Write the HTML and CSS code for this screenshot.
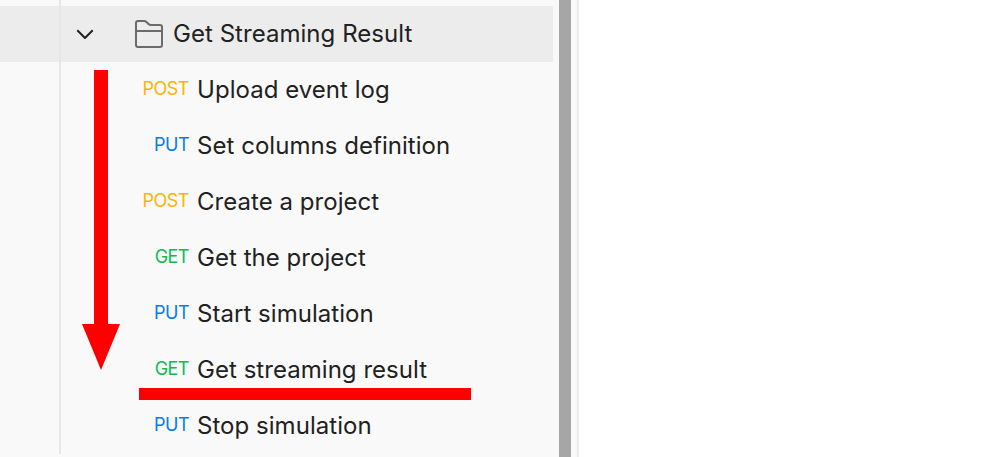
FILE: index.html
```
<!DOCTYPE html>
<html lang="en">
<head>
<meta charset="utf-8">
<title>Collections</title>
<link rel="stylesheet" href="styles.css">
</head>
<body>
<div class="app">
  <aside class="sidebar">
    <div class="folder">
      <svg class="chevron" width="20" height="12" viewBox="0 0 20 12"><path d="M2.300 2.300L10 10l7.700-7.700"/></svg>
      <svg class="folder-icon" width="30" height="30" viewBox="0 0 30 30"><path d="M2 26V4q0-2 2-2h6q1.500 0 2.500 1l2 2q1 1 2.500 1h9q2 0 2 2v18q0 2-2 2H4q-2 0-2-2zM2 12h26"/></svg>
      <span class="folder-name">Get Streaming Result</span>
    </div>
    <ul class="requests">
      <li class="request"><span class="method post">POST</span><span class="name">Upload event log</span></li>
      <li class="request"><span class="method put">PUT</span><span class="name">Set columns definition</span></li>
      <li class="request"><span class="method post">POST</span><span class="name">Create a project</span></li>
      <li class="request"><span class="method get">GET</span><span class="name">Get the project</span></li>
      <li class="request"><span class="method put">PUT</span><span class="name">Start simulation</span></li>
      <li class="request"><span class="method get">GET</span><span class="name">Get streaming result</span></li>
      <li class="request"><span class="method put">PUT</span><span class="name">Stop simulation</span></li>
    </ul>
    <div class="guide"></div>
    <svg class="arrow" width="38" height="300" viewBox="0 0 38 300"><path d="M12 0h14v254h12L19 300 0 254h12z"/></svg>
    <div class="underline"></div>
  </aside>
  <div class="scrollbar"></div>
  <div class="gutter"></div>
  <main class="content"></main>
</div>
</body>
</html>
```
FILE: styles.css
```
body { margin: 0; background: #fff; overflow: hidden; }
.app { display: flex; height: 457px; font-family: Inter, sans-serif; color: #212121; }
.sidebar { position: relative; width: 559px; background: #f9f9f9; padding-top: 6px; box-sizing: border-box; }
.folder { display: flex; align-items: center; width: 553px; height: 56px; padding-left: 75px; box-sizing: border-box; background: #ececec; font-size: 24px; }
.chevron, .folder-icon { fill: none; stroke-linejoin: round; }
.chevron { stroke: #212121; stroke-width: 2; }
.folder-icon { margin-left: 39px; stroke: #6b6b6b; stroke-width: 2; }
.folder-name { margin-left: 9px; padding-bottom: 2px; letter-spacing: 0.04px; white-space: nowrap; }
.requests { list-style: none; margin: 0; padding: 0; }
.request { display: flex; align-items: center; height: 56px; padding-bottom: 2px; box-sizing: border-box; font-size: 24px; }
.method { width: 189px; padding-bottom: 2px; text-align: right; font-size: 18px; letter-spacing: -0.5px; }
.name { margin-left: 8px; letter-spacing: 0.04px; white-space: nowrap; }
.post { color: #ffb400; }
.put { color: #097bed; }
.get { color: #0cbb52; }
.guide { position: absolute; left: 59px; top: 0; width: 2px; height: 454px; background: #e6e6e6; }
.arrow { position: absolute; left: 82px; top: 70px; fill: #f00; }
.underline { position: absolute; left: 139px; top: 388px; width: 332px; height: 12px; background: #f00; }
.scrollbar { width: 12px; background: #a6a6a6; }
.gutter { width: 6px; background: #f9f9f9; border-right: 2px solid #ededed; }
.content { flex: 1; }
```
